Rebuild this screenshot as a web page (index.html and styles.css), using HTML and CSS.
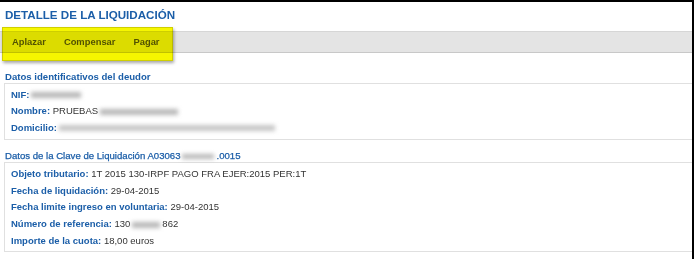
FILE: index.html
```html
<!DOCTYPE html>
<html lang="es">
<head>
<meta charset="utf-8">
<title>Detalle de la liquidación</title>
<link rel="stylesheet" href="styles.css">
</head>
<body>
<div class="page">
  <h1 class="title">DETALLE DE LA LIQUIDACIÓN</h1>
  <div class="toolbar">
    <a class="action">Aplazar</a>
    <a class="action">Compensar</a>
    <a class="action">Pagar</a>
  </div>
  <div class="marker"></div>

  <h2 class="section-title">Datos identificativos del deudor</h2>
  <div class="box box-deudor">
    <div class="row"><span class="label">NIF:</span><span class="redact" style="width:50px"></span></div>
    <div class="row"><span class="label">Nombre:</span> <span class="value">PRUEBAS</span><span class="redact" style="width:78px"></span></div>
    <div class="row"><span class="label">Domicilio:</span><span class="redact redact-light" style="width:216px"></span></div>
  </div>

  <h2 class="section-title sec2">Datos de la Clave de Liquidación A03063<span class="redact redact-h" style="width:32px"></span>.0015</h2>
  <div class="box box-clave">
    <div class="row"><span class="label">Objeto tributario:</span> <span class="value">1T 2015 130-IRPF PAGO FRA EJER:2015 PER:1T</span></div>
    <div class="row"><span class="label">Fecha de liquidación:</span> <span class="value">29-04-2015</span></div>
    <div class="row"><span class="label">Fecha limite ingreso en voluntaria:</span> <span class="value">29-04-2015</span></div>
    <div class="row"><span class="label">Número de referencia:</span> <span class="value">130</span><span class="redact" style="width:28px"></span><span class="value">862</span></div>
    <div class="row"><span class="label">Importe de la cuota:</span> <span class="value">18,00 euros</span></div>
  </div>
</div>
</body>
</html>
```

FILE: styles.css
```css
* { box-sizing: border-box; }
html, body { margin: 0; padding: 0; background: #fff; }
body { font-family: "Liberation Sans", Arial, sans-serif; }

.page {
  position: relative;
  width: 694px;
  height: 259px;
  border-top: 2px solid #000;
  border-right: 2px solid #000;
  overflow: hidden;
}

.title {
  margin: 6px 0 0 5px;
  font-size: 11.6px;
  line-height: 14px;
  font-weight: bold;
  color: #1b5ea8;
}

.toolbar {
  margin-top: 9px;
  height: 22px;
  background: #e4e4e4;
  border-top: 1px solid #d6d6d6;
  border-bottom: 1px solid #c8c8c8;
  display: flex;
  align-items: center;
  gap: 18px;
  padding-left: 12px;
}

.action {
  font-size: 9.4px;
  font-weight: bold;
  color: #555;
  line-height: 20px;
}

.marker {
  position: absolute;
  left: 2px;
  top: 25px;
  width: 171px;
  height: 34px;
  background: #f6f600;
  border: 1px solid #cfcf00;
  box-shadow: 1px 2px 3px rgba(0,0,0,0.35);
  mix-blend-mode: multiply;
}

.section-title {
  margin: 18px 0 0 5px;
  font-size: 9.6px;
  line-height: 12px;
  font-weight: bold;
  color: #1b5ea8;
}
.section-title.sec2 { margin-top: 10px; font-weight: normal; -webkit-text-stroke: 0.25px #1b5ea8; }

.box {
  margin-left: 4px;
  border: 1px solid #e0e0e0;
  border-right: none;
  padding: 2.75px 0 2.75px 6px;
}
.box-clave { padding: 2.6px 0 1.5px 6px; }

.row {
  font-size: 9.5px;
  line-height: 16.6px;
  height: 16.6px;
  white-space: nowrap;
}
.box-clave .row { line-height: 16.75px; height: 16.75px; }

.label { font-weight: bold; color: #1b5ea8; }
.value { color: #333; }

.redact {
  display: inline-block;
  height: 6px;
  vertical-align: middle;
  background: #b8b8b8;
  filter: blur(2.2px);
  margin: 0 2px;
}
.redact-light { background: #c6c6c6; }
.redact-h { height: 5px; }
```
